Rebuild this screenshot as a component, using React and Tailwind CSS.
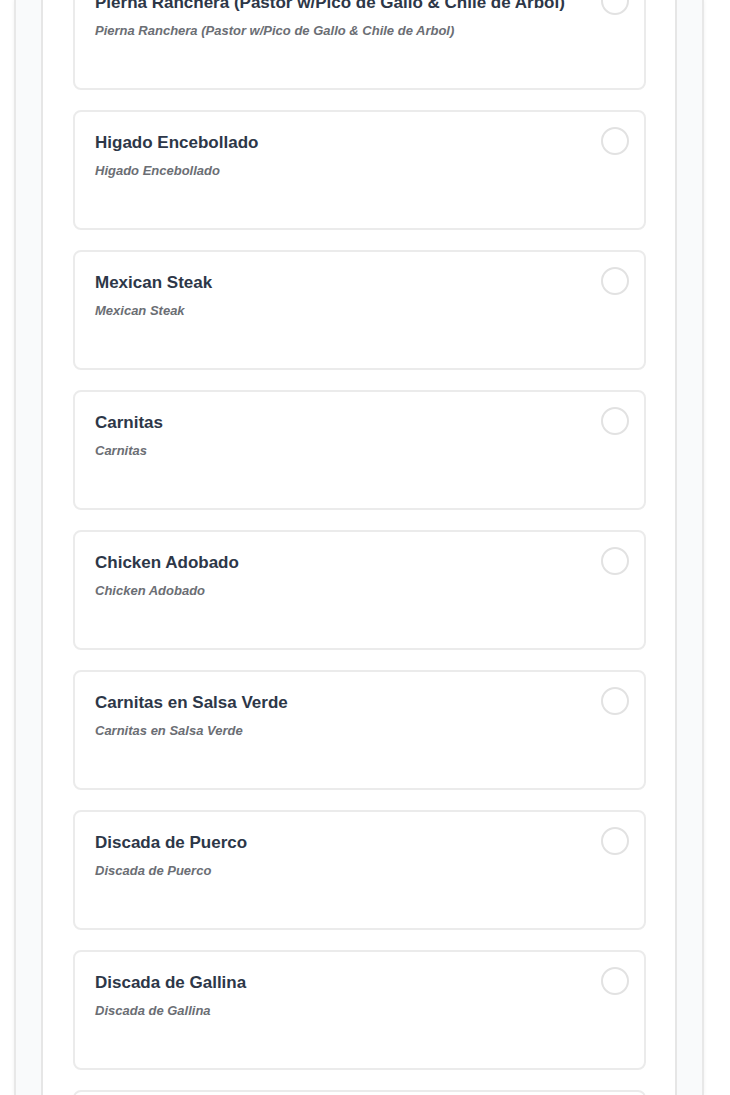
import React from "react";

const items = [
  "Pierna Ranchera (Pastor w/Pico de Gallo & Chile de Arbol)",
  "Higado Encebollado",
  "Mexican Steak",
  "Carnitas",
  "Chicken Adobado",
  "Carnitas en Salsa Verde",
  "Discada de Puerco",
  "Discada de Gallina",
  "Bistec Ranchero",
];

function Card({ name }) {
  return (
    <div className="relative h-[120px] shrink-0 rounded-[8px] border-2 border-[#ebebeb] bg-white pl-[20px] pr-[70px] pt-[18px]">
      <div className="text-[17px] font-bold leading-[25px] text-[#2d3748] whitespace-nowrap">{name}</div>
      <div className="mt-[6px] text-[13px] font-bold italic leading-[20px] text-[#6b6e74]">{name}</div>
      <div className="absolute right-[15px] top-[15px] h-[28px] w-[28px] rounded-full border-2 border-[#e2e2e2] bg-white" />
    </div>
  );
}

export default function App() {
  return (
    <div className="h-[1095px] w-[730px] overflow-hidden bg-white" style={{ fontFamily: '"Liberation Sans", Arial, sans-serif' }}>
      <div className="ml-[14px] flex h-full w-[690px] flex-col border-x-2 border-[#e8e8e8] bg-[#f9fafb] shadow-[0_0_4px_rgba(0,0,0,0.06)]">
        <div className="ml-[25px] flex h-full w-[636px] flex-col overflow-hidden border-x-2 border-[#e6e6e6] bg-white">
          <div className="-mt-[30px] flex flex-col gap-[20px] pl-[30px] pr-[29px]">
            {items.map((n) => (
              <Card key={n} name={n} />
            ))}
          </div>
        </div>
      </div>
    </div>
  );
}
